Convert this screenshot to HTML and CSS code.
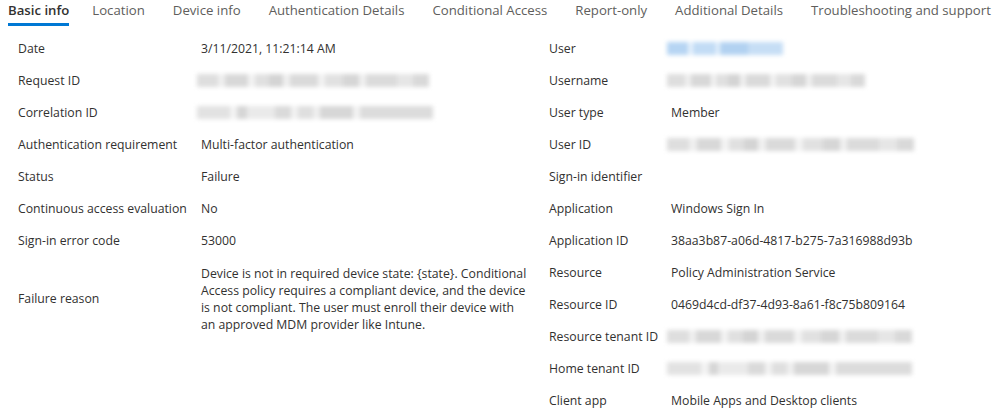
FILE: index.html
```html
<!DOCTYPE html>
<html lang="en">
<head>
  <meta charset="UTF-8">
  <title>Sign-in activity details</title>
  <link rel="stylesheet" href="styles.css">
</head>
<body>

<div class="tabs">
  <span class="tab active">Basic info</span>
  <span class="tab">Location</span>
  <span class="tab">Device info</span>
  <span class="tab">Authentication Details</span>
  <span class="tab">Conditional Access</span>
  <span class="tab">Report-only</span>
  <span class="tab">Additional Details</span>
  <span class="tab">Troubleshooting and support</span>
</div>

<div class="details">
  <div class="panel left">
    <div class="label">Date</div>
    <div class="value">3/11/2021, 11:21:14 AM</div>

    <div class="label">Request ID</div>
    <div class="value"><span class="redacted w232"></span></div>

    <div class="label">Correlation ID</div>
    <div class="value"><span class="redacted w236 shift"></span></div>

    <div class="label">Authentication requirement</div>
    <div class="value">Multi-factor authentication</div>

    <div class="label">Status</div>
    <div class="value">Failure</div>

    <div class="label">Continuous access evaluation</div>
    <div class="value">No</div>

    <div class="label">Sign-in error code</div>
    <div class="value">53000</div>

    <div class="label middle">Failure reason</div>
    <div class="value long">Device is not in required device state: {state}. Conditional<br>Access policy requires a compliant device, and the device<br>is not compliant. The user must enroll their device with<br>an approved MDM provider like Intune.</div>
  </div>

  <div class="panel right">
    <div class="label">User</div>
    <div class="value"><span class="redacted link w116"></span></div>

    <div class="label">Username</div>
    <div class="value"><span class="redacted w198"></span></div>

    <div class="label">User type</div>
    <div class="value">Member</div>

    <div class="label">User ID</div>
    <div class="value"><span class="redacted w247"></span></div>

    <div class="label">Sign-in identifier</div>
    <div class="value"></div>

    <div class="label">Application</div>
    <div class="value">Windows Sign In</div>

    <div class="label">Application ID</div>
    <div class="value">38aa3b87-a06d-4817-b275-7a316988d93b</div>

    <div class="label">Resource</div>
    <div class="value">Policy Administration Service</div>

    <div class="label">Resource ID</div>
    <div class="value">0469d4cd-df37-4d93-8a61-f8c75b809164</div>

    <div class="label">Resource tenant ID</div>
    <div class="value"><span class="redacted w245"></span></div>

    <div class="label">Home tenant ID</div>
    <div class="value"><span class="redacted w245 shift"></span></div>

    <div class="label">Client app</div>
    <div class="value">Mobile Apps and Desktop clients</div>
  </div>
</div>

</body>
</html>
```

FILE: styles.css
```css
body {
  margin: 0;
  background-color: #fff;
  color: #323130;
  font-family: "Open Sans", "Noto Sans", sans-serif;
  font-size: 12.25px;
}

/* Tabs */
.tabs {
  display: flex;
  height: 26px;
  padding-left: 8px;
  white-space: nowrap;
}

.tab {
  margin-right: 28px;
  padding-top: 1px;
  font-size: 13.2px;
  line-height: 19px;
  color: #605e5c;
  border-bottom: 3px solid transparent;
  box-sizing: border-box;
  height: 26px;
  padding-bottom: 3px;
}

.tab.active {
  margin-right: 23px;
  color: #323130;
  font-weight: 600;
  border-bottom-color: #0078d4;
}

/* Detail grid */
.details {
  display: grid;
  grid-template-columns: 531px 1fr;
  margin-top: 7px;
  padding-left: 8px;
}

.panel {
  display: grid;
  align-content: start;
}

.panel.left {
  grid-template-columns: 183px 1fr;
}

.panel.right {
  grid-template-columns: 122px 1fr;
}

.label, .value {
  padding: 8px 10px;
  line-height: 16px;
  min-height: 16px;
  white-space: nowrap;
}

.label.middle {
  align-self: center;
}

.value.long {
  line-height: 17px;
}

/* Blurred values */
.redacted {
  display: inline-block;
  height: 13px;
  vertical-align: -2px;
  margin-left: -4px;
  filter: blur(2.2px);
  background:
    linear-gradient(90deg,
      #dedede 0 9%, #efefef 9% 12%, #d8d8d8 12% 22%, #f3f3f3 22% 25%,
      #e0e0e0 25% 31%, #d4d4d4 31% 37%, #f0f0f0 37% 40%, #dadada 40% 52%,
      #f2f2f2 52% 55%, #e1e1e1 55% 63%, #d6d6d6 63% 70%, #f0f0f0 70% 73%,
      #dbdbdb 73% 86%, #e6e6e6 86% 93%, #d9d9d9 93% 100%);
}

.redacted.shift {
  background:
    linear-gradient(90deg,
      #e2e2e2 0 14%, #f3f3f3 14% 17%, #d6d6d6 17% 21%, #eaeaea 21% 33%,
      #dadada 33% 40%, #f2f2f2 40% 43%, #dfdfdf 43% 49%, #efefef 49% 52%,
      #d7d7d7 52% 66%, #f3f3f3 66% 69%, #dcdcdc 69% 100%);
}

.redacted.link {
  background:
    linear-gradient(90deg,
      #b6d5f3 0 18%, #e6f1fc 18% 22%, #c2dcf5 22% 42%, #e6f1fc 42% 46%,
      #b2d2f1 46% 70%, #c6def5 70% 100%);
}

.w116 { width: 116px; }
.w198 { width: 198px; }
.w232 { width: 232px; }
.w236 { width: 236px; }
.w245 { width: 245px; }
.w247 { width: 247px; }
```
